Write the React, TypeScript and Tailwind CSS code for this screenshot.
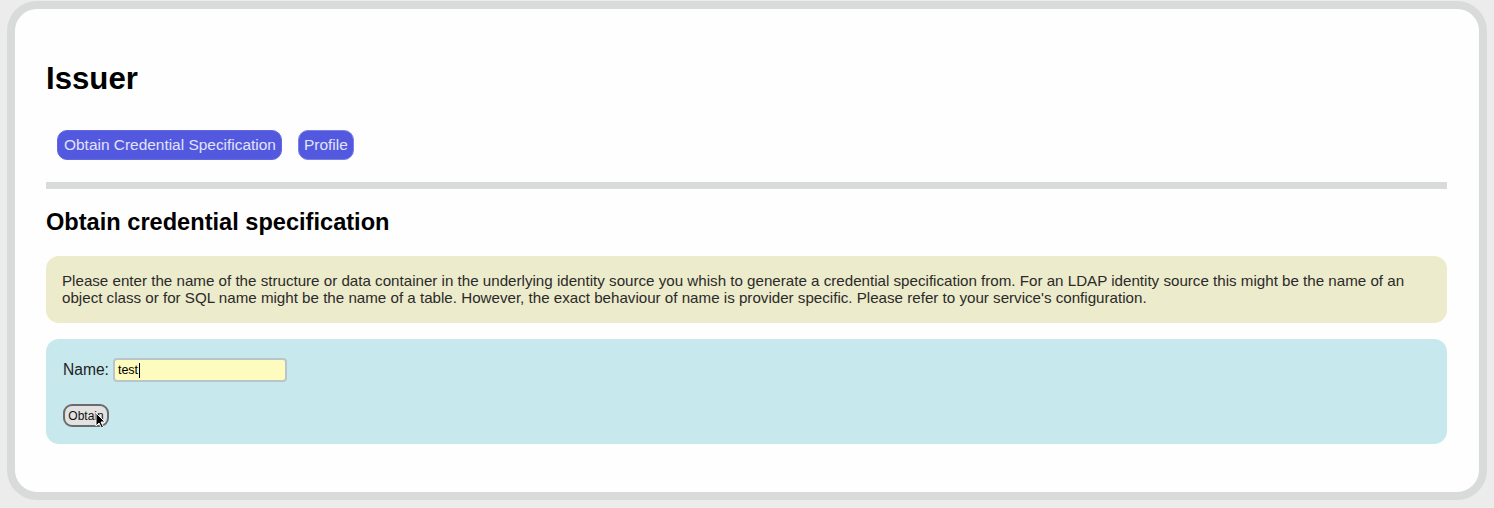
import React from "react";

export default function App() {
  return (
    <div className="w-[1494px] h-[508px] bg-[#ececec] pt-[1px] pl-[7px] font-['Liberation_Sans',Arial,sans-serif]">
      <div className="w-[1480px] h-[499px] border-8 border-[#d9dbdb] rounded-[30px] bg-[#fefefe] pl-[31px] pr-[32px] pt-[52px]">
        <h1 className="text-[31.2px] leading-[36px] font-bold text-black">Issuer</h1>
        <div className="flex gap-[16px] ml-[11px] mt-[33px]">
          <span className="h-[30px] flex items-center pl-[6px] pr-[5px] rounded-[10px] bg-[#5359de] border border-[#6368e0] text-[#e2e3fb] text-[15.45px]">
            Obtain Credential Specification
          </span>
          <span className="h-[30px] flex items-center px-[5px] rounded-[10px] bg-[#5359de] border border-[#7b80e8] text-[#e2e3fb] text-[15.45px]">
            Profile
          </span>
        </div>
        <div className="h-[7px] bg-[#d9dbdb] mt-[22px]" />
        <h2 className="text-[23.6px] leading-[28px] font-bold text-black mt-[19px]">
          Obtain credential specification
        </h2>
        <div className="mt-[20px] h-[67px] rounded-[13px] bg-[#ecebcb] px-[16px] pt-[16px] text-[15.15px] leading-[17px] text-[#2a2a2a]">
          Please enter the name of the structure or data container in the underlying identity source you whish to generate a credential specification from. For an LDAP identity source this might be the name of an object class or for SQL name might be the name of a table. However, the exact behaviour of name is provider specific. Please refer to your service's configuration.
        </div>
        <div className="mt-[16px] h-[105px] rounded-[13px] bg-[#c7e8ec] pl-[17px] pt-[19px]">
          <div className="flex items-center h-[24px]">
            <span className="text-[15.6px] text-[#222] mr-[4px]">Name:</span>
            <div className="relative w-[174px] h-[24px] rounded-[4px] border-2 border-[#b9c5c8] bg-[#fdfbbd] flex items-center pl-[3px] text-[12.5px] text-black">
              test
              <span className="inline-block w-[1px] h-[15px] bg-black ml-[1px]" />
            </div>
          </div>
          <div className="relative mt-[22px] w-[46px] h-[23px] rounded-[9px] border-2 border-[#6b6b6b] bg-[#e2e2e2] flex items-center justify-center text-[12px] text-[#111]">
            Obtain
            <svg
              className="absolute left-[30px] top-[6px]"
              width="11"
              height="17"
              viewBox="0 0 11 17"
            >
              <path
                d="M1 1 L1 14 L4 11 L6.5 16 L8.5 15 L6 10 L10 10 Z"
                fill="#000"
                stroke="#fff"
                strokeWidth="1"
                strokeLinejoin="round"
              />
            </svg>
          </div>
        </div>
      </div>
    </div>
  );
}
